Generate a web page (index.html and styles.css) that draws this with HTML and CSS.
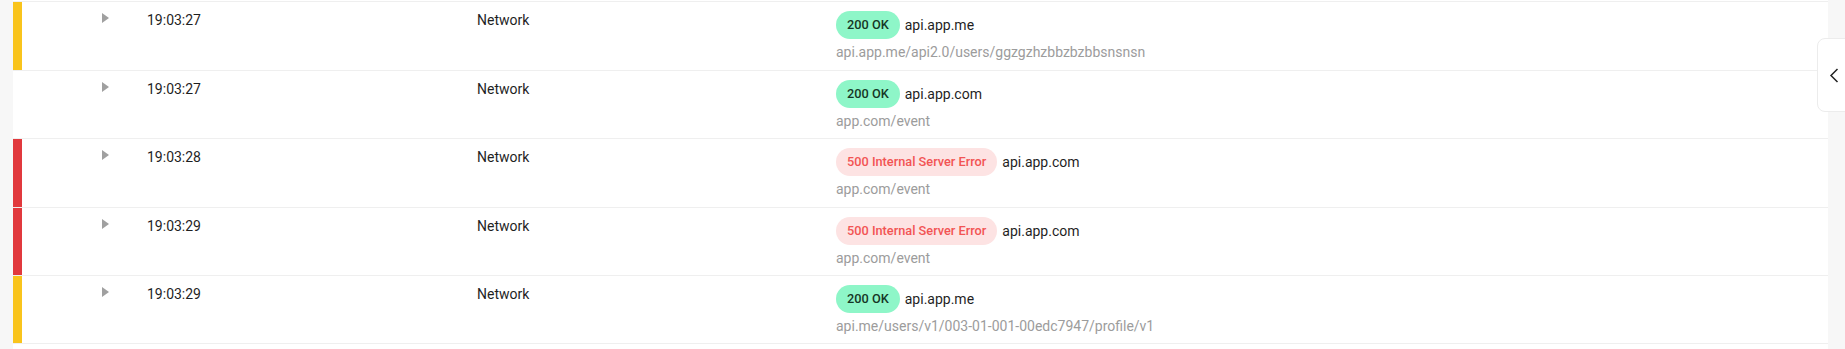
FILE: index.html
```html
<!DOCTYPE html>
<html lang="en">
<head>
<meta charset="utf-8">
<title>Network log</title>
<link rel="stylesheet" href="styles.css">
</head>
<body>
<div class="page">
  <div class="list">
    <div class="row">
      <div class="bar bar-warn"></div>
      <div class="caret-cell"><span class="caret"></span></div>
      <div class="cell">19:03:27</div>
      <div class="cell">Network</div>
      <div class="details">
        <div class="line1"><span class="badge badge-ok">200 OK</span><span class="host">api.app.me</span></div>
        <div class="path">api.app.me/api2.0/users/ggzgzhzbbzbzbbsnsnsn</div>
      </div>
    </div>
    <div class="row">
      <div class="bar"></div>
      <div class="caret-cell"><span class="caret"></span></div>
      <div class="cell">19:03:27</div>
      <div class="cell">Network</div>
      <div class="details">
        <div class="line1"><span class="badge badge-ok">200 OK</span><span class="host">api.app.com</span></div>
        <div class="path">app.com/event</div>
      </div>
    </div>
    <div class="row">
      <div class="bar bar-error"></div>
      <div class="caret-cell"><span class="caret"></span></div>
      <div class="cell">19:03:28</div>
      <div class="cell">Network</div>
      <div class="details">
        <div class="line1"><span class="badge badge-error">500 Internal Server Error</span><span class="host">api.app.com</span></div>
        <div class="path">app.com/event</div>
      </div>
    </div>
    <div class="row">
      <div class="bar bar-error"></div>
      <div class="caret-cell"><span class="caret"></span></div>
      <div class="cell">19:03:29</div>
      <div class="cell">Network</div>
      <div class="details">
        <div class="line1"><span class="badge badge-error">500 Internal Server Error</span><span class="host">api.app.com</span></div>
        <div class="path">app.com/event</div>
      </div>
    </div>
    <div class="row">
      <div class="bar bar-warn"></div>
      <div class="caret-cell"><span class="caret"></span></div>
      <div class="cell">19:03:29</div>
      <div class="cell">Network</div>
      <div class="details">
        <div class="line1"><span class="badge badge-ok">200 OK</span><span class="host">api.app.me</span></div>
        <div class="path">api.me/users/v1/003-01-001-00edc7947/profile/v1</div>
      </div>
    </div>
  </div>
  <button class="side-tab" aria-label="Open panel">
    <svg width="10" height="15" viewBox="0 0 10 15"><path d="M8.5 1 L2 7.5 L8.5 14" fill="none" stroke="#222" stroke-width="1.5"/></svg>
  </button>
</div>
</body>
</html>
```
FILE: styles.css
```css
html, body {
  margin: 0;
  padding: 0;
  height: 100%;
  background: #f7f7f7;
  font-family: Roboto, "Liberation Sans", sans-serif;
  font-size: 14px;
  color: #1f1f1f;
  overflow: hidden;
}
.page {
  position: relative;
  height: 100%;
}
.list {
  margin-left: 13px;
  width: 1815px;
  height: 100%;
  background: #fff;
  padding-top: 1px;
  box-sizing: border-box;
}
.row {
  display: grid;
  grid-template-columns: 9px 125px 330px 359px 1fr;
  height: 68.5px;
  box-sizing: border-box;
  border-top: 1px solid #efefef;
}
.row:last-child {
  border-bottom: 1px solid #efefef;
}
.bar-warn { background: #f9c41c; }
.bar-error { background: #e1393d; }
.caret-cell {
  padding-left: 80px;
}
.caret {
  display: block;
  width: 0;
  height: 0;
  margin-top: 11px;
  border-left: 7px solid #a0a0a0;
  border-top: 5.5px solid transparent;
  border-bottom: 5.5px solid transparent;
}
.cell {
  margin-top: 8px;
  line-height: 20px;
}
.details {
  margin-top: 9px;
}
.line1 {
  display: flex;
  align-items: center;
  height: 28px;
}
.badge {
  height: 28px;
  line-height: 28px;
  padding: 0 11px;
  border-radius: 14px;
  font-size: 12.75px;
  font-weight: 500;
}
.badge-ok {
  background: #8ef6c8;
  color: #163626;
}
.badge-error {
  background: #fde3e3;
  color: #f25454;
}
.host {
  margin-left: 5px;
}
.path {
  margin-top: 3px;
  line-height: 20px;
  color: #9c9c9c;
}
.side-tab {
  position: absolute;
  left: 1817px;
  top: 38px;
  width: 40px;
  height: 74px;
  background: #fff;
  border: 1px solid #ececec;
  border-radius: 8px;
  padding: 0 0 0 11px;
  display: flex;
  align-items: center;
  box-sizing: border-box;
  cursor: pointer;
}
```
